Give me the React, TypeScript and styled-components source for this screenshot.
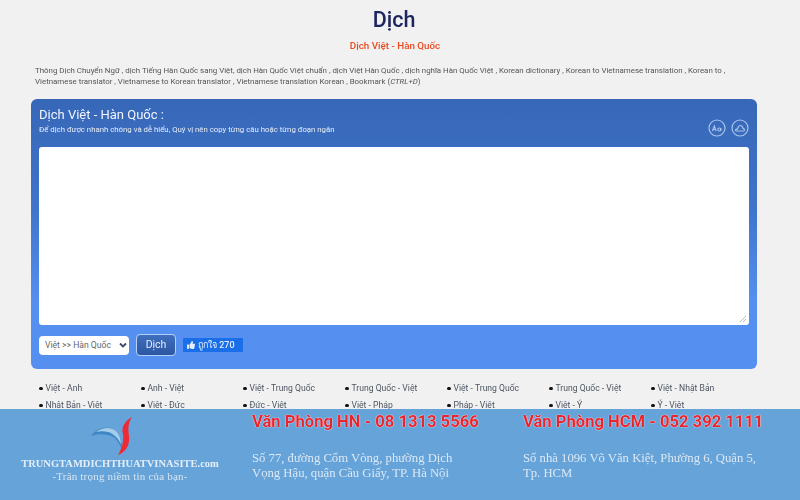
import React from 'react';
import styled, { createGlobalStyle } from 'styled-components';
import { FaThumbsUp } from 'react-icons/fa';

const GlobalStyle = createGlobalStyle`
  html, body {
    margin: 0;
    padding: 0;
    background: #f1f1f1;
  }
`;

const Page = styled.div`
  display: flex;
  flex-direction: column;
  width: 800px;
  height: 500px;
  overflow: hidden;
  font-family: Roboto, 'Noto Sans', sans-serif;
  filter: blur(0.35px);
`;

const Main = styled.main`
  flex: 1;
  min-height: 0;
  overflow: hidden;
  padding: 5px 43px 0 31px;
`;

const Title = styled.h1`
  margin: 0;
  height: 30px;
  font-size: 21.5px;
  line-height: 30px;
  font-weight: 500;
  text-align: center;
  color: #1d2560;
`;

const Subtitle = styled.h2`
  margin: 3px 0 0;
  height: 16px;
  padding-left: 2px;
  font-size: 9.8px;
  line-height: 16px;
  font-weight: 500;
  text-align: center;
  color: #e8491f;
`;

const Intro = styled.p`
  margin: 12px 0 0;
  padding-left: 4px;
  height: 28px;
  font-size: 7.9px;
  line-height: 10.5px;
  color: #555;
`;

const Panel = styled.section`
  box-sizing: border-box;
  height: 270px;
  margin-top: 5px;
  padding: 7px 8px 0;
  border-radius: 6px;
  background: linear-gradient(#3767b7, #3f74ca 40%, #558ff0 75%);
`;

const PanelHead = styled.div`
  display: flex;
  justify-content: space-between;
  align-items: flex-start;
  height: 41px;
`;

const PanelTitle = styled.div`
  font-size: 13px;
  line-height: 17px;
  color: #f1f5fc;
`;

const PanelHint = styled.div`
  margin-top: 2px;
  font-size: 7.8px;
  line-height: 10px;
  color: #e6edf9;
`;

const HeadIcons = styled.div`
  display: flex;
  gap: 5px;
  padding-top: 13px;
`;

const RoundIcon = styled.svg`
  display: block;
  width: 18px;
  height: 18px;
  fill: none;
  stroke: #a9c4ea;
  stroke-width: 1.2;
`;

const TextBox = styled.div`
  position: relative;
  height: 178px;
  border-radius: 3px;
  background: #fff;
`;

const Grip = styled.svg`
  position: absolute;
  right: 3px;
  bottom: 3px;
  width: 6px;
  height: 6px;
  stroke: #aaa;
  stroke-width: 0.8;
`;

const Controls = styled.div`
  display: flex;
  align-items: center;
  height: 22px;
  margin-top: 9px;
`;

const LangSelect = styled.div`
  box-sizing: border-box;
  display: flex;
  align-items: center;
  justify-content: space-between;
  width: 90px;
  height: 19px;
  padding: 0 2px 0 6px;
  border-radius: 4px;
  background: #fff;
  font-size: 8.6px;
  color: #666;
`;

const Chevron = styled.svg`
  width: 8px;
  height: 8px;
  fill: none;
  stroke: #3b4a6b;
  stroke-width: 1.8;
`;

const TranslateButton = styled.div`
  box-sizing: border-box;
  width: 40px;
  height: 22px;
  margin-left: 7px;
  border: 1px solid #b5d0f7;
  border-radius: 4px;
  background: linear-gradient(#3f6fbd, #2c56a3);
  font-size: 10.5px;
  line-height: 20px;
  text-align: center;
  color: #e3ecfa;
`;

const LikeBadge = styled.div`
  display: flex;
  align-items: center;
  gap: 3px;
  width: 60px;
  box-sizing: border-box;
  height: 14px;
  margin-left: 7px;
  padding-left: 4px;
  border-radius: 1px;
  background: #1a6fe8;
  font-size: 9px;
  font-weight: 500;
  color: #e4eefc;
  svg {
    width: 8px;
    height: 8px;
  }
`;

const LinkGrid = styled.ul`
  display: grid;
  grid-template-columns: repeat(7, 102px);
  grid-auto-rows: 17px;
  margin: 11px 0 0;
  padding: 0 0 0 8px;
  list-style: none;
`;

const LinkItem = styled.li`
  display: flex;
  align-items: center;
  gap: 3px;
  font-size: 8.6px;
  line-height: 17px;
  color: #4c5560;
  white-space: nowrap;
  &::before {
    content: '';
    width: 3.5px;
    height: 3.5px;
    border-radius: 50%;
    background: #111;
  }
`;

const Footer = styled.footer`
  display: grid;
  grid-template-columns: 252px 271px 1fr;
  flex: none;
  height: 91px;
  background: #66a3d9;
`;

const Brand = styled.div`
  display: flex;
  flex-direction: column;
  align-items: center;
  padding-top: 7px;
  font-family: 'Liberation Serif', serif;
  color: #e3eef8;
  box-sizing: border-box;
  width: 240px;
`;

const Logo = styled.svg`
  display: block;
  width: 46px;
  height: 42px;
  margin-right: 16px;
`;

const BrandName = styled.div`
  margin-top: -1px;
  font-size: 10.5px;
  line-height: 13px;
  font-weight: 700;
  white-space: nowrap;
`;

const Slogan = styled.div`
  font-size: 11px;
  line-height: 13px;
  letter-spacing: 0.2px;
  color: #d5e5f4;
`;

const Office = styled.div`
  padding-top: 3px;
`;

const OfficeTitle = styled.div`
  font-size: 16.6px;
  line-height: 20px;
  font-weight: 700;
  color: #e8252f;
  white-space: nowrap;
  text-shadow: 0 0 1px #fff, 0 0 1px #fff;
`;

const OfficeAddress = styled.div`
  margin-top: 19px;
  font-family: 'Liberation Serif', serif;
  font-size: 12.7px;
  line-height: 14.5px;
  color: #dbe8f5;
`;

const links = [
  'Việt - Anh',
  'Anh - Việt',
  'Việt - Trung Quốc',
  'Trung Quốc - Việt',
  'Việt - Trung Quốc',
  'Trung Quốc - Việt',
  'Việt - Nhật Bản',
  'Nhật Bản - Việt',
  'Việt - Đức',
  'Đức - Việt',
  'Việt - Pháp',
  'Pháp - Việt',
  'Việt - Ý',
  'Ý - Việt',
];

const App: React.FC = () => (
  <Page>
    <GlobalStyle />
    <Main>
      <Title>Dịch</Title>
      <Subtitle>Dịch Việt - Hàn Quốc</Subtitle>
      <Intro>
        Thông Dịch Chuyển Ngữ , dịch Tiếng Hàn Quốc sang Việt, dịch Hàn Quốc Việt chuẩn , dịch Việt Hàn Quốc , dịch nghĩa Hàn Quốc Việt , Korean dictionary , Korean to Vietnamese translation , Korean to , Vietnamese translator , Vietnamese to Korean translator , Vietnamese translation Korean , Bookmark (<i>CTRL+D</i>)
      </Intro>
      <Panel>
        <PanelHead>
          <div>
            <PanelTitle>Dịch Việt - Hàn Quốc :</PanelTitle>
            <PanelHint>Để dịch được nhanh chóng và dễ hiểu, Quý vị nên copy từng câu hoặc từng đoạn ngắn</PanelHint>
          </div>
          <HeadIcons>
            <RoundIcon viewBox="0 0 18 18">
              <circle cx="9" cy="9" r="8" />
              <path d="M4.500 12l1.800-5 1.800 5M5.200 10.500h2.200" />
              <circle cx="11.300" cy="10.500" r="1.500" />
              <path d="M12.800 9v3" />
            </RoundIcon>
            <RoundIcon viewBox="0 0 18 18">
              <circle cx="9" cy="9" r="8" />
              <path d="M4.500 12c0-1.500 1-2.200 2-2.200C7 8 8 6.500 9.200 6.500c1.500 0 2.500 1.300 2.700 2.800 1 .1 1.700 1 1.700 2.200M4.500 12h9" />
            </RoundIcon>
          </HeadIcons>
        </PanelHead>
        <TextBox>
          <Grip viewBox="0 0 6 6">
            <path d="M0 6L6 0M3 6l3-3" />
          </Grip>
        </TextBox>
        <Controls>
          <LangSelect>
            Việt &gt;&gt; Hàn Quốc
            <Chevron viewBox="0 0 8 8">
              <path d="M1 2.500l3 3 3-3" />
            </Chevron>
          </LangSelect>
          <TranslateButton>Dịch</TranslateButton>
          <LikeBadge>
            <FaThumbsUp />
            ถูกใจ 270
          </LikeBadge>
        </Controls>
      </Panel>
      <LinkGrid>
        {links.map((label, i) => (
          <LinkItem key={i}>{label}</LinkItem>
        ))}
      </LinkGrid>
    </Main>
    <Footer>
      <Brand>
        <Logo viewBox="0 0 46 42">
          <path d="M2 20C9 11 20 9 27 15c4 4 6 11 6 19-3-8-7-14-14-15-6-1-12-1-17 1z" fill="#3f86c4" />
          <path d="M7 16c7-5 15-5 20-1 3 3 5 8 5 13-3-6-8-11-13-12-4-1-8-1-12 0z" fill="#a5cde8" />
          <path d="M43 1c-7 4-11 10-9 17 1 7-1 14-5 21 8-3 12-10 11-19-1-7-1-13 3-19z" fill="#ee2a35" />
        </Logo>
        <BrandName>TRUNGTAMDICHTHUATVINASITE.com</BrandName>
        <Slogan>-Trân trọng niềm tin của bạn-</Slogan>
      </Brand>
      <Office>
        <OfficeTitle>Văn Phòng HN - 08 1313 5566</OfficeTitle>
        <OfficeAddress>
          Số 77, đường Cốm Vòng, phường Dịch
          <br />
          Vọng Hậu, quận Cầu Giấy, TP. Hà Nội
        </OfficeAddress>
      </Office>
      <Office>
        <OfficeTitle>Văn Phòng HCM - 052 392 1111</OfficeTitle>
        <OfficeAddress>
          Số nhà 1096 Võ Văn Kiệt, Phường 6, Quận 5,
          <br />
          Tp. HCM
        </OfficeAddress>
      </Office>
    </Footer>
  </Page>
);

export default App;
